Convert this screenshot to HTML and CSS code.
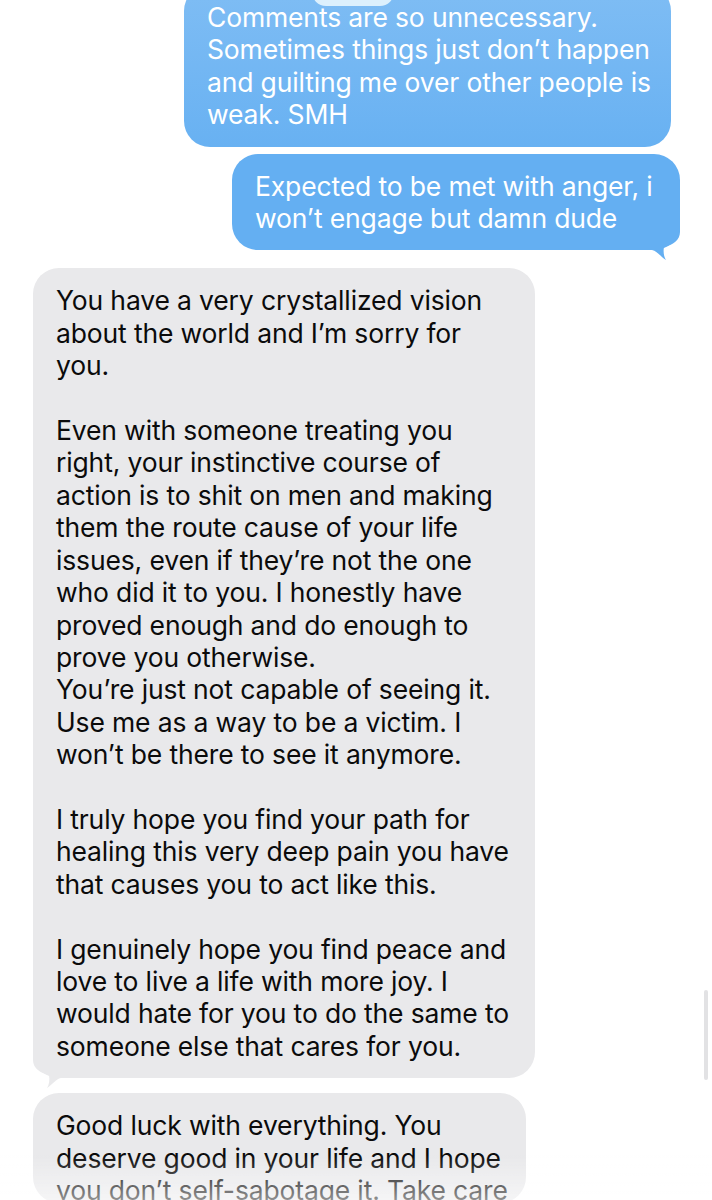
FILE: index.html
```html
<!DOCTYPE html>
<html lang="en">
<head>
<meta charset="utf-8">
<title>Messages</title>
<link rel="stylesheet" href="styles.css">
</head>
<body>
<main class="thread">
  <div class="row row-out">
    <div class="bubble bubble-out bubble-first">
      <span class="tapback"></span>
      Comments are so unnecessary.<br>
      Sometimes things just don’t happen<br>
      and guilting me over other people is<br>
      weak. SMH
    </div>
  </div>
  <div class="row row-out gap-s">
    <div class="bubble bubble-out bubble-second">
      Expected to be met with anger, i<br>
      won’t engage but damn dude
      <svg class="tail tail-out" viewBox="0 0 31 43" aria-hidden="true"><path d="M0 0 H31 V12 C31 20 24 25 15 27 C14 32 15 37 17 40 C12 37 8 31 3 30 H0 Z"/></svg>
    </div>
  </div>
  <div class="row row-in gap-l">
    <div class="bubble bubble-in bubble-long">
      You have a very crystallized vision<br>
      about the world and I’m sorry for<br>
      you.<br>
      <br>
      Even with someone treating you<br>
      right, your instinctive course of<br>
      action is to shit on men and making<br>
      them the route cause of your life<br>
      issues, even if they’re not the one<br>
      who did it to you. I honestly have<br>
      proved enough and do enough to<br>
      prove you otherwise.<br>
      You’re just not capable of seeing it.<br>
      Use me as a way to be a victim. I<br>
      won’t be there to see it anymore.<br>
      <br>
      I truly hope you find your path for<br>
      healing this very deep pain you have<br>
      that causes you to act like this.<br>
      <br>
      I genuinely hope you find peace and<br>
      love to live a life with more joy. I<br>
      would hate for you to do the same to<br>
      someone else that cares for you.
      <svg class="tail tail-in" viewBox="0 0 31 43" aria-hidden="true"><path d="M31 0 H0 V12 C0 20 7 25 16 27 C17 32 16 37 14 40 C19 37 23 31 28 30 H31 Z"/></svg>
    </div>
  </div>
  <div class="row row-in gap-m">
    <div class="bubble bubble-in bubble-last">
      Good luck with everything. You<br>
      deserve good in your life and I hope<br>
      you don’t self-sabotage it. Take care
    </div>
  </div>
</main>
<div class="scroll-indicator"></div>
<div class="bottom-fade"></div>
</body>
</html>
```
FILE: styles.css
```css
html, body {
  margin: 0;
  padding: 0;
  background: #ffffff;
}

body {
  width: 712px;
  height: 1200px;
  overflow: hidden;
  font-family: Inter, "Liberation Sans", sans-serif;
  -webkit-font-smoothing: antialiased;
}

.thread {
  display: flex;
  flex-direction: column;
  margin-top: -15px;
}

.row {
  display: flex;
}

.row-out {
  justify-content: flex-end;
}

.row-in {
  justify-content: flex-start;
  padding-left: 33px;
}

.gap-s { margin-top: 7px; }
.gap-m { margin-top: 15px; }
.gap-l { margin-top: 18px; }

.bubble {
  position: relative;
  z-index: 0;
  box-sizing: border-box;
  padding: 16px 10px 16px 23px;
  border-radius: 26px;
  font-size: 26.5px;
  line-height: 32.4px;
  letter-spacing: -0.15px;
  white-space: nowrap;
}

.bubble-out {
  color: #ffffff;
  background: #64aff2;
}

.bubble-in {
  color: #0b0b0b;
  background: #e9e9eb;
}

.bubble-first {
  width: 487px;
  margin-right: 41px;
  background: linear-gradient(180deg, #7fbdf4 0%, #68b1f2 100%);
}

.bubble-second {
  width: 448px;
  margin-right: 32px;
}

.bubble-long {
  width: 502px;
}

.bubble-last {
  width: 493px;
  height: 110px;
}

.tapback {
  position: absolute;
  left: 128px;
  top: 0;
  width: 82px;
  height: 21px;
  border-radius: 0 0 14px 14px;
  background: #dcf0fd;
}

.tail {
  position: absolute;
  z-index: -1;
  bottom: -13px;
  width: 31px;
  height: 43px;
}

.tail-out {
  right: 0;
  fill: #64aff2;
}

.tail-in {
  left: 0;
  fill: #e9e9eb;
}

.scroll-indicator {
  position: fixed;
  left: 704px;
  top: 990px;
  width: 4px;
  height: 90px;
  border-radius: 2px;
  background: #e2e2e4;
}

.bottom-fade {
  position: fixed;
  left: 0;
  right: 0;
  bottom: 0;
  height: 45px;
  background: linear-gradient(180deg, rgba(255,255,255,0) 0%, rgba(255,255,255,0.55) 100%);
}
```
